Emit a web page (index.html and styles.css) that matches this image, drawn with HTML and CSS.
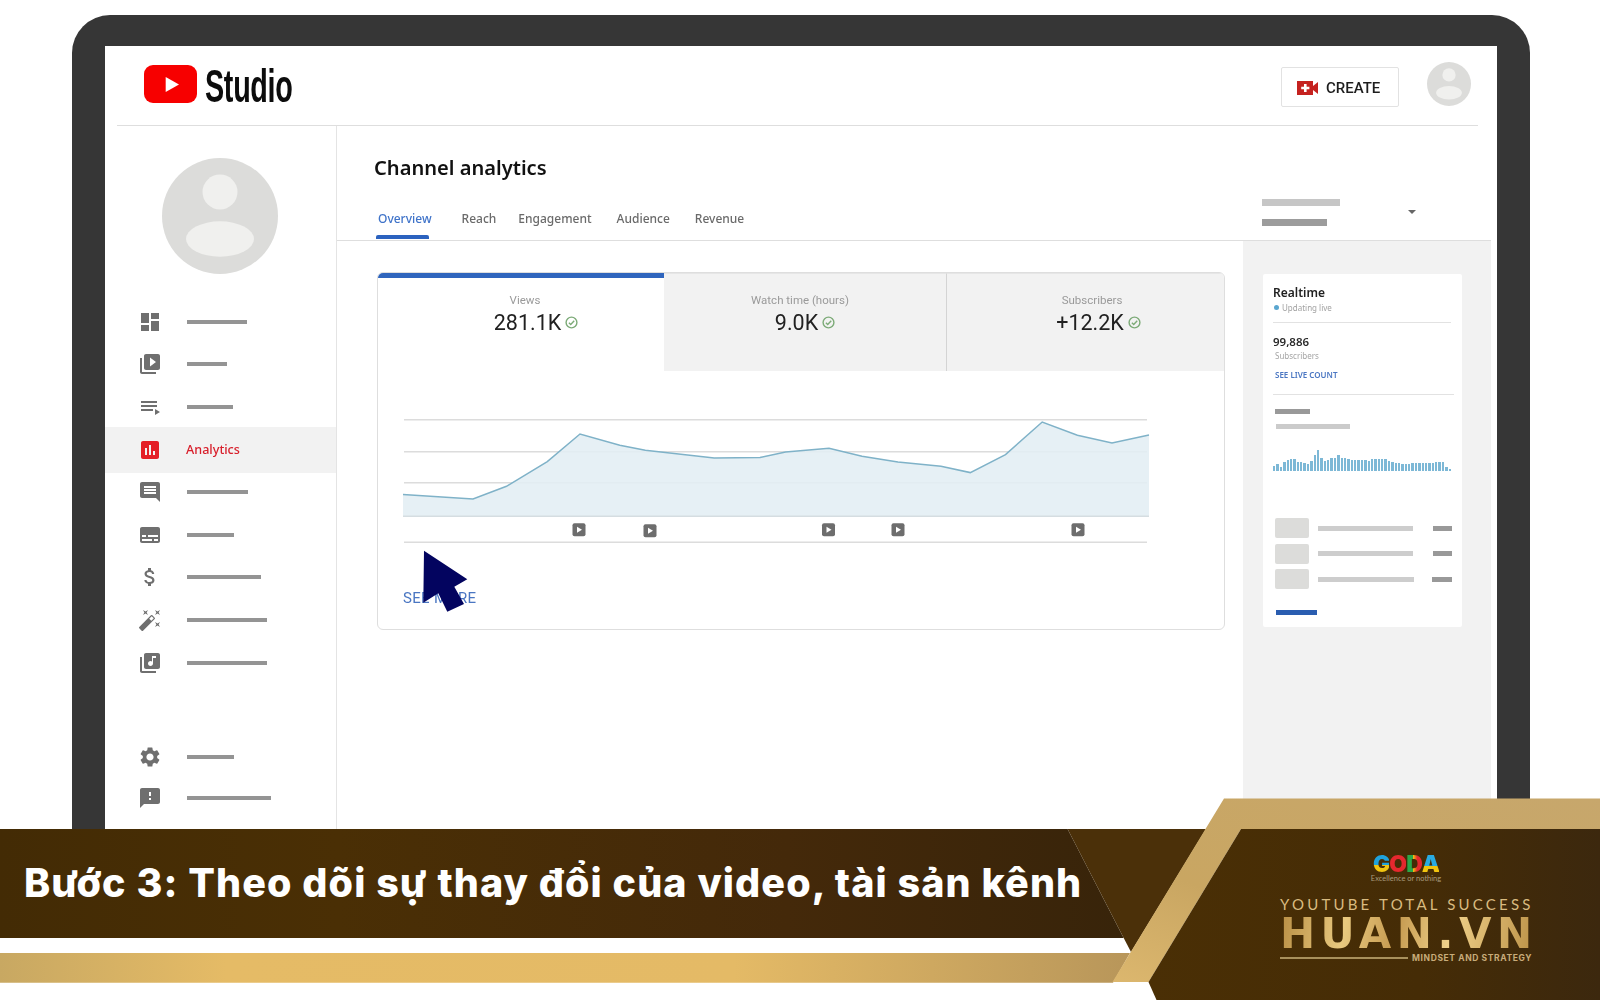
FILE: index.html
```html
<!DOCTYPE html>
<html lang="vi">
<head>
<meta charset="utf-8">
<title>Bước 3: Theo dõi sự thay đổi của video, tài sản kênh</title>
<link rel="stylesheet" href="styles.css">
</head>
<body>
<div class="stage">
  <div class="laptop">
    <div class="screen">
      <header class="topbar">
        <div class="logo">
          <svg class="logo-mark" viewBox="0 0 53 38"><rect width="53" height="38" rx="9" fill="#f70000"/><path d="M21.7 12 35 19.5 21.7 27z" fill="#fff"/></svg>
          <span class="logo-text">Studio</span>
        </div>
        <button class="create">
          <svg class="create-icon" viewBox="0 0 22 14"><path d="M0 0h16v5l5-4v12l-5-4v5H0z" fill="#c5221f"/><path d="M7 3h2.6v2.8h2.8v2.4H9.600v2.800H7V8.200H4.200V5.800H7z" fill="#fff"/></svg>
          <span class="create-label">CREATE</span>
        </button>
        <svg class="avatar-small" viewBox="0 0 116 116"><circle cx="58" cy="58" r="58" fill="#dcdcda"/><circle cx="58" cy="34" r="17.500" fill="#f0f0ee"/><ellipse cx="58" cy="81" rx="34" ry="17.700" fill="#f0f0ee"/></svg>
      </header>
      <div class="workspace">
        <aside class="sidebar">
          <svg class="avatar-big" viewBox="0 0 116 116"><circle cx="58" cy="58" r="58" fill="#dcdcda"/><circle cx="58" cy="34" r="17.500" fill="#f0f0ee"/><ellipse cx="58" cy="81" rx="34" ry="17.700" fill="#f0f0ee"/></svg>
          <nav class="nav">
            <div class="nav-item"><svg class="nav-icon" viewBox="0 0 24 24"><path d="M3 13h8V3H3v10zm0 8h8v-6H3v6zm10 0h8V11h-8v10zm0-18v6h8V3h-8z"/></svg><span class="nav-bar w60"></span></div>
            <div class="nav-item"><svg class="nav-icon" viewBox="0 0 24 24"><path d="M4 6H2v14c0 1.100.9 2 2 2h14v-2H4V6zm16-4H8c-1.100 0-2 .9-2 2v12c0 1.100.9 2 2 2h12c1.100 0 2-.9 2-2V4c0-1.100-.9-2-2-2zm-8 12.500v-9l6 4.500-6 4.500z"/></svg><span class="nav-bar w40"></span></div>
            <div class="nav-item"><svg class="nav-icon" viewBox="0 0 24 24"><path d="M3 6h16v2H3zm0 4h16v2H3zm0 4h12v2H3zm14 0v6l5-3z"/></svg><span class="nav-bar w46"></span></div>
            <div class="nav-item is-active"><svg class="nav-icon" viewBox="0 0 24 24"><path d="M19 3H5c-1.100 0-2 .9-2 2v14c0 1.100.9 2 2 2h14c1.100 0 2-.9 2-2V5c0-1.100-.9-2-2-2zM9 17H7v-7h2v7zm4 0h-2V7h2v10zm4 0h-2v-4h2v4z"/></svg><span class="nav-label">Analytics</span></div>
            <div class="nav-item"><svg class="nav-icon" viewBox="0 0 24 24"><path d="M21.990 4c0-1.100-.89-2-1.990-2H4c-1.100 0-2 .9-2 2v12c0 1.100.9 2 2 2h14l4 4-.01-18zM18 14H6v-2h12v2zm0-3H6V9h12v2zm0-3H6V6h12v2z"/></svg><span class="nav-bar w61"></span></div>
            <div class="nav-item"><svg class="nav-icon" viewBox="0 0 24 24"><path d="M20 4H4c-1.100 0-2 .9-2 2v12c0 1.100.9 2 2 2h16c1.100 0 2-.9 2-2V6c0-1.100-.9-2-2-2zM4 12h4v2H4v-2zm10 6H4v-2h10v2zm6 0h-4v-2h4v2zm0-4H10v-2h10v2z"/></svg><span class="nav-bar w47"></span></div>
            <div class="nav-item"><svg class="nav-icon" viewBox="0 0 24 24"><path d="M11.800 10.900c-2.270-.59-3-1.200-3-2.150 0-1.090 1.010-1.850 2.700-1.850 1.780 0 2.440.85 2.500 2.100h2.210c-.07-1.720-1.120-3.300-3.210-3.810V3h-3v2.160c-1.940.42-3.500 1.680-3.500 3.610 0 2.310 1.910 3.460 4.700 4.130 2.500.6 3 1.480 3 2.410 0 .69-.49 1.790-2.700 1.790-2.060 0-2.870-.92-2.980-2.100h-2.200c.12 2.190 1.760 3.420 3.680 3.830V21h3v-2.150c1.950-.37 3.500-1.500 3.500-3.550 0-2.840-2.430-3.810-4.700-4.400z"/></svg><span class="nav-bar w74"></span></div>
            <div class="nav-item"><svg class="nav-icon" viewBox="0 0 24 24"><path d="M7.500 5.600 10 7 8.600 4.500 10 2 7.500 3.400 5 2l1.400 2.500L5 7zm12 9.800L17 14l1.400 2.500L17 19l2.500-1.400L22 19l-1.400-2.500L22 14zM22 2l-2.500 1.400L17 2l1.400 2.500L17 7l2.500-1.400L22 7l-1.400-2.500zm-7.630 5.290a.996.996 0 0 0-1.410 0L1.290 18.960a.996.996 0 0 0 0 1.410l2.340 2.340c.39.39 1.020.39 1.410 0L16.700 11.050a.996.996 0 0 0 0-1.410l-2.330-2.350zm-1.030 5.490-2.120-2.120 2.440-2.440 2.120 2.120-2.440 2.440z"/></svg><span class="nav-bar w80"></span></div>
            <div class="nav-item"><svg class="nav-icon" viewBox="0 0 24 24"><path d="M20 2H8c-1.100 0-2 .9-2 2v12c0 1.100.9 2 2 2h12c1.100 0 2-.9 2-2V4c0-1.100-.9-2-2-2zm-2 5h-3v5.500c0 1.380-1.120 2.500-2.500 2.500S10 13.880 10 12.500s1.120-2.500 2.500-2.500c.57 0 1.080.19 1.500.51V5h4v2zM4 6H2v14c0 1.100.9 2 2 2h14v-2H4V6z"/></svg><span class="nav-bar w80"></span></div>
          </nav>
          <nav class="nav nav-bottom">
            <div class="nav-item"><svg class="nav-icon" viewBox="0 0 24 24"><path d="M19.140 12.940c.04-.3.06-.61.06-.94 0-.32-.02-.64-.07-.94l2.030-1.580a.49.49 0 0 0 .12-.61l-1.920-3.320a.488.488 0 0 0-.59-.22l-2.390.96c-.5-.38-1.030-.7-1.620-.94l-.36-2.540a.484.484 0 0 0-.48-.41h-3.840c-.24 0-.43.17-.47.41l-.36 2.540c-.59.24-1.130.57-1.620.94l-2.390-.96c-.22-.08-.47 0-.59.22L2.740 8.870c-.12.21-.08.47.12.61l2.030 1.580c-.05.3-.09.63-.09.94s.02.64.07.94l-2.030 1.580a.49.49 0 0 0-.12.61l1.920 3.320c.12.22.37.29.59.22l2.390-.96c.5.38 1.030.7 1.620.94l.36 2.540c.05.24.24.41.48.41h3.840c.24 0 .44-.17.47-.41l.36-2.540c.59-.24 1.130-.56 1.620-.94l2.390.96c.22.08.47 0 .59-.22l1.920-3.320c.12-.22.07-.47-.12-.61l-2.010-1.580zM12 15.600c-1.980 0-3.600-1.620-3.600-3.600s1.620-3.600 3.600-3.600 3.600 1.620 3.600 3.600-1.620 3.600-3.600 3.600z"/></svg><span class="nav-bar w47"></span></div>
            <div class="nav-item"><svg class="nav-icon" viewBox="0 0 24 24"><path d="M20 2H4c-1.100 0-1.990.9-1.990 2L2 22l4-4h14c1.100 0 2-.9 2-2V4c0-1.100-.9-2-2-2zm-7 12h-2v-2h2v2zm0-4h-2V6h2v4z"/></svg><span class="nav-bar w84"></span></div>
          </nav>
        </aside>
        <main class="main">
          <div class="main-head">
            <div class="head-left">
              <h1 class="page-title">Channel analytics</h1>
              <div class="tabs">
                <span class="tab is-current">Overview</span>
                <span class="tab tab-reach">Reach</span>
                <span class="tab">Engagement</span>
                <span class="tab">Audience</span>
                <span class="tab">Revenue</span>
              </div>
            </div>
            <div class="head-right">
              <div class="range-bars"><span class="range-a"></span><span class="range-b"></span></div>
              <span class="caret"></span>
            </div>
          </div>
          <div class="content">
            <div class="content-left">
              <section class="card">
                <div class="stats">
                  <div class="stat stat-views">
                    <span class="stat-label">Views</span>
                    <span class="stat-value">281.1K<svg class="ok" viewBox="0 0 12 12"><circle cx="6" cy="6" r="5" /><path d="M3.600 6.200 5.300 7.800 8.500 4.400"/></svg></span>
                  </div>
                  <div class="stat stat-watch">
                    <span class="stat-label">Watch time (hours)</span>
                    <span class="stat-value">9.0K<svg class="ok" viewBox="0 0 12 12"><circle cx="6" cy="6" r="5" /><path d="M3.600 6.200 5.300 7.800 8.500 4.400"/></svg></span>
                  </div>
                  <div class="stat stat-subs">
                    <span class="stat-label">Subscribers</span>
                    <span class="stat-value">+12.2K<svg class="ok" viewBox="0 0 12 12"><circle cx="6" cy="6" r="5" /><path d="M3.600 6.200 5.300 7.800 8.500 4.400"/></svg></span>
                  </div>
                </div>
                <svg class="chart" viewBox="378 370.700 846 190">
                  <g class="grid"><path d="M404 419.500H1147M404 451.500H1147M404 482.500H1147M404 542H1147"/></g>
                  <path class="area" d="M403 494.300 473 498.700 506.500 486 547.300 461.300 580 433.700 619.800 445 645.300 450 714.200 457.700 760 457.300 785.600 451.700 829 448 862 456 897.900 461.700 941 466 970.300 472.300 1005.500 454.300 1042.200 421.700 1077.400 435 1112 442.700 1149 434.700V516H403z"/>
                  <path class="base" d="M403 516H1149"/>
                  <path class="line" d="M403 494.300 473 498.700 506.500 486 547.300 461.300 580 433.700 619.800 445 645.300 450 714.200 457.700 760 457.300 785.600 451.700 829 448 862 456 897.900 461.700 941 466 970.300 472.300 1005.500 454.300 1042.200 421.700 1077.400 435 1112 442.700 1149 434.700"/>
                  <g class="chip"><rect x="572.500" y="523" width="13" height="13" rx="2"/><path d="M577 526.500 582 529.500 577 532.500z"/></g>
                  <g class="chip"><rect x="643.500" y="524" width="13" height="13" rx="2"/><path d="M648 527.500 653 530.500 648 533.500z"/></g>
                  <g class="chip"><rect x="822" y="523" width="13" height="13" rx="2"/><path d="M826.500 526.500 831.500 529.500 826.500 532.500z"/></g>
                  <g class="chip"><rect x="891.500" y="523" width="13" height="13" rx="2"/><path d="M896 526.500 901 529.500 896 532.500z"/></g>
                  <g class="chip"><rect x="1071.500" y="523" width="13" height="13" rx="2"/><path d="M1076 526.500 1081 529.500 1076 532.500z"/></g>
                </svg>
                <a class="see-more">SEE MORE</a>
              </section>
            </div>
            <div class="content-right">
              <section class="realtime">
                <h2 class="rt-title">Realtime</h2>
                <div class="rt-live"><span class="rt-dot"></span>Updating live</div>
                <div class="rt-rule"></div>
                <div class="rt-count">99,886</div>
                <div class="rt-sub">Subscribers</div>
                <div class="rt-link">SEE LIVE COUNT</div>
                <div class="rt-rule rt-rule-2"></div>
                <span class="rt-bar-a"></span>
                <span class="rt-bar-b"></span>
                <div class="spark"><i style="height:5px"></i><i style="height:7px"></i><i style="height:4px"></i><i style="height:9px"></i><i style="height:11px"></i><i style="height:12px"></i><i style="height:12px"></i><i style="height:9px"></i><i style="height:9px"></i><i style="height:8px"></i><i style="height:7px"></i><i style="height:10px"></i><i style="height:16px"></i><i style="height:21px"></i><i style="height:13px"></i><i style="height:10px"></i><i style="height:11px"></i><i style="height:13px"></i><i style="height:13px"></i><i style="height:16px"></i><i style="height:13px"></i><i style="height:13px"></i><i style="height:12px"></i><i style="height:11px"></i><i style="height:11px"></i><i style="height:11px"></i><i style="height:11px"></i><i style="height:11px"></i><i style="height:10px"></i><i style="height:12px"></i><i style="height:12px"></i><i style="height:12px"></i><i style="height:12px"></i><i style="height:12px"></i><i style="height:10px"></i><i style="height:9px"></i><i style="height:8px"></i><i style="height:8px"></i><i style="height:7px"></i><i style="height:7px"></i><i style="height:7px"></i><i style="height:8px"></i><i style="height:8px"></i><i style="height:8px"></i><i style="height:8px"></i><i style="height:8px"></i><i style="height:8px"></i><i style="height:8px"></i><i style="height:9px"></i><i style="height:9px"></i><i style="height:9px"></i><i style="height:4px"></i><i style="height:2px"></i></div>
                <div class="rt-rows">
                  <div class="rt-row"><span class="rt-thumb"></span><span class="rt-line"></span><span class="rt-num"></span></div>
                  <div class="rt-row"><span class="rt-thumb"></span><span class="rt-line"></span><span class="rt-num"></span></div>
                  <div class="rt-row rt-row-last"><span class="rt-thumb"></span><span class="rt-line"></span><span class="rt-num"></span></div>
                </div>
                <span class="rt-more"></span>
              </section>
            </div>
          </div>
        </main>
      </div>
    </div>
  </div>

  <svg class="cursor" viewBox="420 548 50 66"><path d="M424 550.700 467.300 579.300 454.300 586.700 464 604 447.300 611.700 438.300 593.300 423.300 602.700z"/></svg>

  <div class="banner">
    <svg class="banner-art" viewBox="0 798 1600 202">
      <defs>
        <linearGradient id="dark" x1="0" x2="1" y1="0" y2="0"><stop offset="0" stop-color="#432b05"/><stop offset=".3" stop-color="#4a2f05"/><stop offset=".7" stop-color="#44290a"/><stop offset="1" stop-color="#38240a"/></linearGradient>
        <linearGradient id="strip" x1="0" x2="1" y1="0" y2="0"><stop offset="0" stop-color="#c8a862"/><stop offset=".2" stop-color="#e5bb66"/><stop offset=".65" stop-color="#e4ba66"/><stop offset="1" stop-color="#b8965a"/></linearGradient>
        <linearGradient id="band" x1="0" x2="1" y1="1" y2="0"><stop offset="0" stop-color="#dcb76e"/><stop offset=".35" stop-color="#c9a662"/><stop offset="1" stop-color="#c7a76c"/></linearGradient>
        <linearGradient id="panel" x1="0" x2="1" y1="0" y2="0"><stop offset="0" stop-color="#4a2f05"/><stop offset=".6" stop-color="#452c06"/><stop offset="1" stop-color="#3c280e"/></linearGradient>
      </defs>
      <path d="M0 829H1067.600L1123.700 938H0z" fill="url(#dark)"/>
      <path d="M1067.600 829H1206L1131 952 1123.700 938z" fill="#4b3009"/>
      <path d="M0 953H1130L1113 982.700H0z" fill="url(#strip)"/>
      <path d="M1224 798.500H1600V829H1241L1148.500 982H1112.500z" fill="url(#band)"/>
      <path d="M1241 829H1600V1000H1156.500L1148.500 982z" fill="url(#panel)"/>
    </svg>
    <h2 class="banner-title">Bước 3: Theo dõi sự thay đổi của video, tài sản kênh</h2>
    <div class="brand">
      <div class="goda"><span class="g-g">G</span><span class="g-o">O</span><span class="g-d">D</span><span class="g-a">A</span></div>
      <div class="goda-tag">Excellence or nothing</div>
      <div class="brand-top">YOUTUBE TOTAL SUCCESS</div>
      <div class="brand-name">HUAN.VN</div>
      <div class="brand-foot"><span class="brand-rule"></span><span class="brand-sub">MINDSET AND STRATEGY</span></div>
    </div>
  </div>
</div>
</body>
</html>
```
FILE: styles.css
```css
* { box-sizing: border-box; }
html, body { margin: 0; padding: 0; background: #fff; }
body { font-family: "Noto Sans", "Liberation Sans", sans-serif; }
.stage { position: relative; width: 1600px; height: 1000px; overflow: hidden; background: #fff; }

/* laptop */
.laptop {
  width: 1458px; height: 814px; margin: 15px 0 0 72px;
  border: solid #363636; border-width: 31px 33px 0;
  border-radius: 38px 38px 0 0;
  box-shadow: inset 0 0 0 1px #555;
  background: #363636;
}
.screen { height: 100%; background: #fff; display: flex; flex-direction: column; overflow: hidden; filter: blur(.35px); }

/* top bar */
.topbar { flex: none; height: 80px; margin: 0 19px 0 12px; padding: 0 7px 0 27px; border-bottom: 1px solid #dedede; display: flex; align-items: flex-start; }
.logo { display: flex; align-items: flex-start; margin-top: 19px; margin-right: auto; }
.logo-mark { width: 53px; height: 38px; display: block; }
.logo-text { display: block; width: 90px; margin: 2px 0 0 8px; font: 700 46px/38px "Liberation Sans", sans-serif; color: #0c0c0c; transform: scaleX(.625); transform-origin: left center; letter-spacing: -.5px; }
.create { width: 118px; height: 40px; margin-top: 21px; padding: 2px 0 0 15px; display: flex; align-items: center; gap: 7px; border: 1px solid #e2e2e2; border-radius: 2px; background: #fff; font: 500 15px/1 Roboto, sans-serif; color: #1d1d1d; }
.create-icon { width: 22px; height: 14px; display: block; }
.create-label { display: block; margin-top: 0; }
.avatar-small { width: 44px; height: 44px; margin: 16px 0 0 28px; display: block; }

.workspace { flex: 1; display: flex; min-height: 0; }

/* sidebar */
.sidebar { flex: none; width: 232px; border-right: 1px solid #e4e4e4; padding-top: 32px; }
.avatar-big { display: block; width: 116px; height: 116px; margin: 0 0 26.500px 57px; }
.nav-item { height: 42.600px; padding-left: 33px; display: flex; align-items: center; gap: 25px; }
.nav-icon { width: 24px; height: 24px; flex: none; fill: #6f6f6f; }
.nav-bar { height: 4px; background: #949494; }
.nav-item.is-active { height: 46px; margin: -1.700px 0; background: #f2f2f2; gap: 24px; }
.nav-item.is-active .nav-icon { fill: #e41e26; }
.nav-label { font-size: 12.600px; line-height: 16px; font-weight: 500; color: #d8202c; }
.nav-bottom { margin-top: 53px; }
.nav-bottom .nav-item { height: 41px; }
.w40 { width: 40px; } .w46 { width: 46px; } .w47 { width: 47px; } .w60 { width: 60px; }
.w61 { width: 61px; } .w74 { width: 74px; } .w80 { width: 80px; } .w84 { width: 84px; }

/* main */
.main { flex: 1; min-width: 0; display: flex; flex-direction: column; }
.main-head { flex: none; height: 115px; margin-right: 6px; border-bottom: 1px solid #dedede; display: flex; justify-content: space-between; }
.head-left { padding-top: 27px; }
.page-title { margin: 0 0 0 37px; font-size: 20.100px; line-height: 30px; font-weight: 600; color: #111; }
.tabs { margin-top: 27px; padding-left: 41px; display: flex; gap: 25px; }
.tab { position: relative; font-size: 12px; line-height: 18px; font-weight: 500; color: #6a6a6a; }
.tab.is-current { color: #3f73c9; margin-right: 5px; }
.tab-reach { margin-right: -3px; }
.tab.is-current::after { content: ""; position: absolute; left: -2px; top: 25px; width: 53px; height: 4px; background: #2b62bf; border-radius: 2px 2px 0 0; }
.head-right { width: 229px; padding-top: 73px; display: flex; align-items: center; align-self: flex-start; }
.range-bars { width: 146px; display: flex; flex-direction: column; gap: 12.500px; }
.range-a { width: 78px; height: 7px; background: #c6c6c6; }
.range-b { width: 65px; height: 7px; background: #9c9c9c; }
.caret { width: 0; height: 0; border: solid transparent; border-width: 4px 4px 0; border-top-color: #666; }

.content { flex: 1; display: flex; min-height: 0; }
.content-left { flex: none; width: 906px; padding: 31px 0 0 40px; }
.content-right { flex: none; width: 248px; padding: 33px 29px 0 20px; background: #f2f2f2; }

/* card */
.card { width: 848px; height: 358px; border: 1px solid #dedede; border-radius: 6px; overflow: hidden; }
.stats { display: grid; grid-template-columns: 286px 283px 1fr; height: 98px; }
.stat { display: flex; flex-direction: column; align-items: center; padding-top: 19px; background: #f2f2f2; }
.stat-views { background: #fff; border-top: 5px solid #2f65bd; padding-top: 14px; }
.stat-watch { border-right: 1px solid #d4d4d4; border-top: 1px solid #e6e6e6; padding-top: 18px; }
.stat-subs { border-top: 1px solid #e6e6e6; padding-top: 18px; }
.stat-label { font: 400 11.500px/16px Roboto, sans-serif; color: #9a9a9a; }
.stat-value { margin-top: 2px; display: flex; align-items: center; gap: 4px; font: 400 21.500px/26px Roboto, sans-serif; color: #212121; }
.stat-views .stat-label { margin-left: 8px; }
.stat-views .stat-value { margin-left: 30px; }
.stat-watch .stat-label { margin-right: 10px; }
.stat-watch .stat-value { margin-left: 0; }
.stat-subs .stat-label { margin-left: 13px; }
.stat-subs .stat-value { margin-left: 26px; }
.ok { width: 13px; height: 13px; margin-top: -2px; fill: none; stroke: #7dab78; stroke-width: 1.300; flex: none; }

.chart { display: block; width: 846px; height: 190px; }
.grid path { fill: none; stroke: #dcdcdc; stroke-width: 1.500; }
.area { fill: #e3eef4; fill-opacity: .88; }
.base { fill: none; stroke: #d5dde1; stroke-width: 1.500; }
.line { fill: none; stroke: #7fb2c8; stroke-width: 1.500; }
.chip rect { fill: #6d6d6d; }
.chip path { fill: #fff; }
.see-more { display: block; margin: 29px 0 0 25px; font: 400 15px/16px Roboto, sans-serif; letter-spacing: .3px; color: #4a76c2; }

/* realtime */
.realtime { width: 199px; height: 353px; padding: 12px 10px 0; background: #fff; border-radius: 2px; display: flex; flex-direction: column; align-items: flex-start; }
.rt-title { margin: 0; font-size: 12px; line-height: 14px; font-weight: 600; color: #222; }
.rt-live { margin: 1px 0 0 1px; display: flex; align-items: center; gap: 3px; font-size: 8px; line-height: 13px; color: #a2a2a2; }
.rt-dot { width: 5px; height: 5px; border-radius: 50%; background: #5aa6cf; }
.rt-rule { width: 178px; height: 1px; margin-top: 8px; background: #e2e2e2; flex: none; }
.rt-count { margin-top: 12px; font-size: 11.500px; line-height: 14px; font-weight: 600; color: #2a2a2a; }
.rt-sub { margin: 1px 0 0 2px; font-size: 8px; line-height: 12px; color: #a5a5a5; }
.rt-link { margin: 7px 0 0 2px; font-size: 8px; line-height: 12px; font-weight: 600; color: #4a76c2; }
.rt-rule-2 { width: 181px; margin-top: 13px; }
.rt-bar-a { display: block; width: 35px; height: 5px; margin: 14px 0 0 2px; background: #999; }
.rt-bar-b { display: block; width: 74px; height: 5px; margin: 10px 0 0 3px; background: #cbcbcb; }
.spark { width: 178px; height: 21px; margin-top: 21px; display: flex; align-items: flex-end; gap: .9px; }
.spark i { display: block; width: 2.500px; background: #7db8d6; }
.rt-rows { margin-top: 47px; width: 100%; display: flex; flex-direction: column; gap: 5.500px; }
.rt-row { display: flex; align-items: center; padding-left: 2px; }
.rt-thumb { width: 35px; height: 20px; background: #dcdcda; border-radius: 2px; }
.rt-line { width: 98px; height: 5px; margin-left: 9px; background: #cdcdcd; }
.rt-num { width: 20px; height: 5px; margin-left: 20px; background: #999; }
.rt-row-last .rt-num { margin-left: 18px; }
.rt-more { display: block; width: 41px; height: 5px; margin: 21px 0 0 3px; background: #2a5db0; }

/* cursor */
.cursor { position: absolute; left: 420px; top: 548px; width: 50px; height: 66px; fill: #03045f; }

/* banner */
.banner { position: absolute; left: 0; top: 798px; width: 1600px; height: 202px; display: flex; justify-content: space-between; }
.banner-art { position: absolute; left: 0; top: 0; width: 1600px; height: 202px; }
.banner-title { position: relative; margin: 62px 0 0 24px; font: 800 39.500px/46px Inter, "Noto Sans", sans-serif; letter-spacing: 1.090px; color: #fff; white-space: nowrap; }
.brand { position: relative; width: 252px; margin: 57px 68px 0 0; display: flex; flex-direction: column; align-items: center; }
.goda { display: flex; height: 19px; font: 900 23px/18px Inter, sans-serif; letter-spacing: -1px; }
.goda span { -webkit-background-clip: text; background-clip: text; color: transparent; }
.g-g { background: linear-gradient(180deg, #1fa3dd 55%, #f1c40f 55%); }
.g-o { background: linear-gradient(180deg, #e5282e 100%, #e5282e 100%); }
.g-d { background: linear-gradient(90deg, #2aa84a 45%, #f1c40f 45%, #e5282e 70%); }
.g-a { background: linear-gradient(180deg, #29abe2 60%, #f1c40f 60%); }
.goda-tag { font: 400 7.500px/9px Lato, sans-serif; color: #a89a7c; }
.brand-top { margin-top: 12px; width: 100%; font: 400 15px/18px Lato, sans-serif; letter-spacing: 3.200px; color: #d9bb80; white-space: nowrap; text-align: center; }
.brand-name { height: 34px; margin-top: 4px; font: 700 42px/34px "DejaVu Sans", sans-serif; letter-spacing: 5.500px; margin-right: -5.500px; white-space: nowrap; background: linear-gradient(100deg, #b98f45 0%, #e9c97f 25%, #c59a50 45%, #f0d18a 65%, #b98f45 100%); -webkit-background-clip: text; background-clip: text; color: transparent; }
.brand-foot { width: 100%; display: flex; align-items: center; gap: 4px; margin-top: 2px; }
.brand-rule { flex: 1; height: 1.500px; background: #a8905c; }
.brand-sub { font: 700 8.500px/10px Inter, sans-serif; letter-spacing: .6px; color: #c8ac7a; white-space: nowrap; }
```
